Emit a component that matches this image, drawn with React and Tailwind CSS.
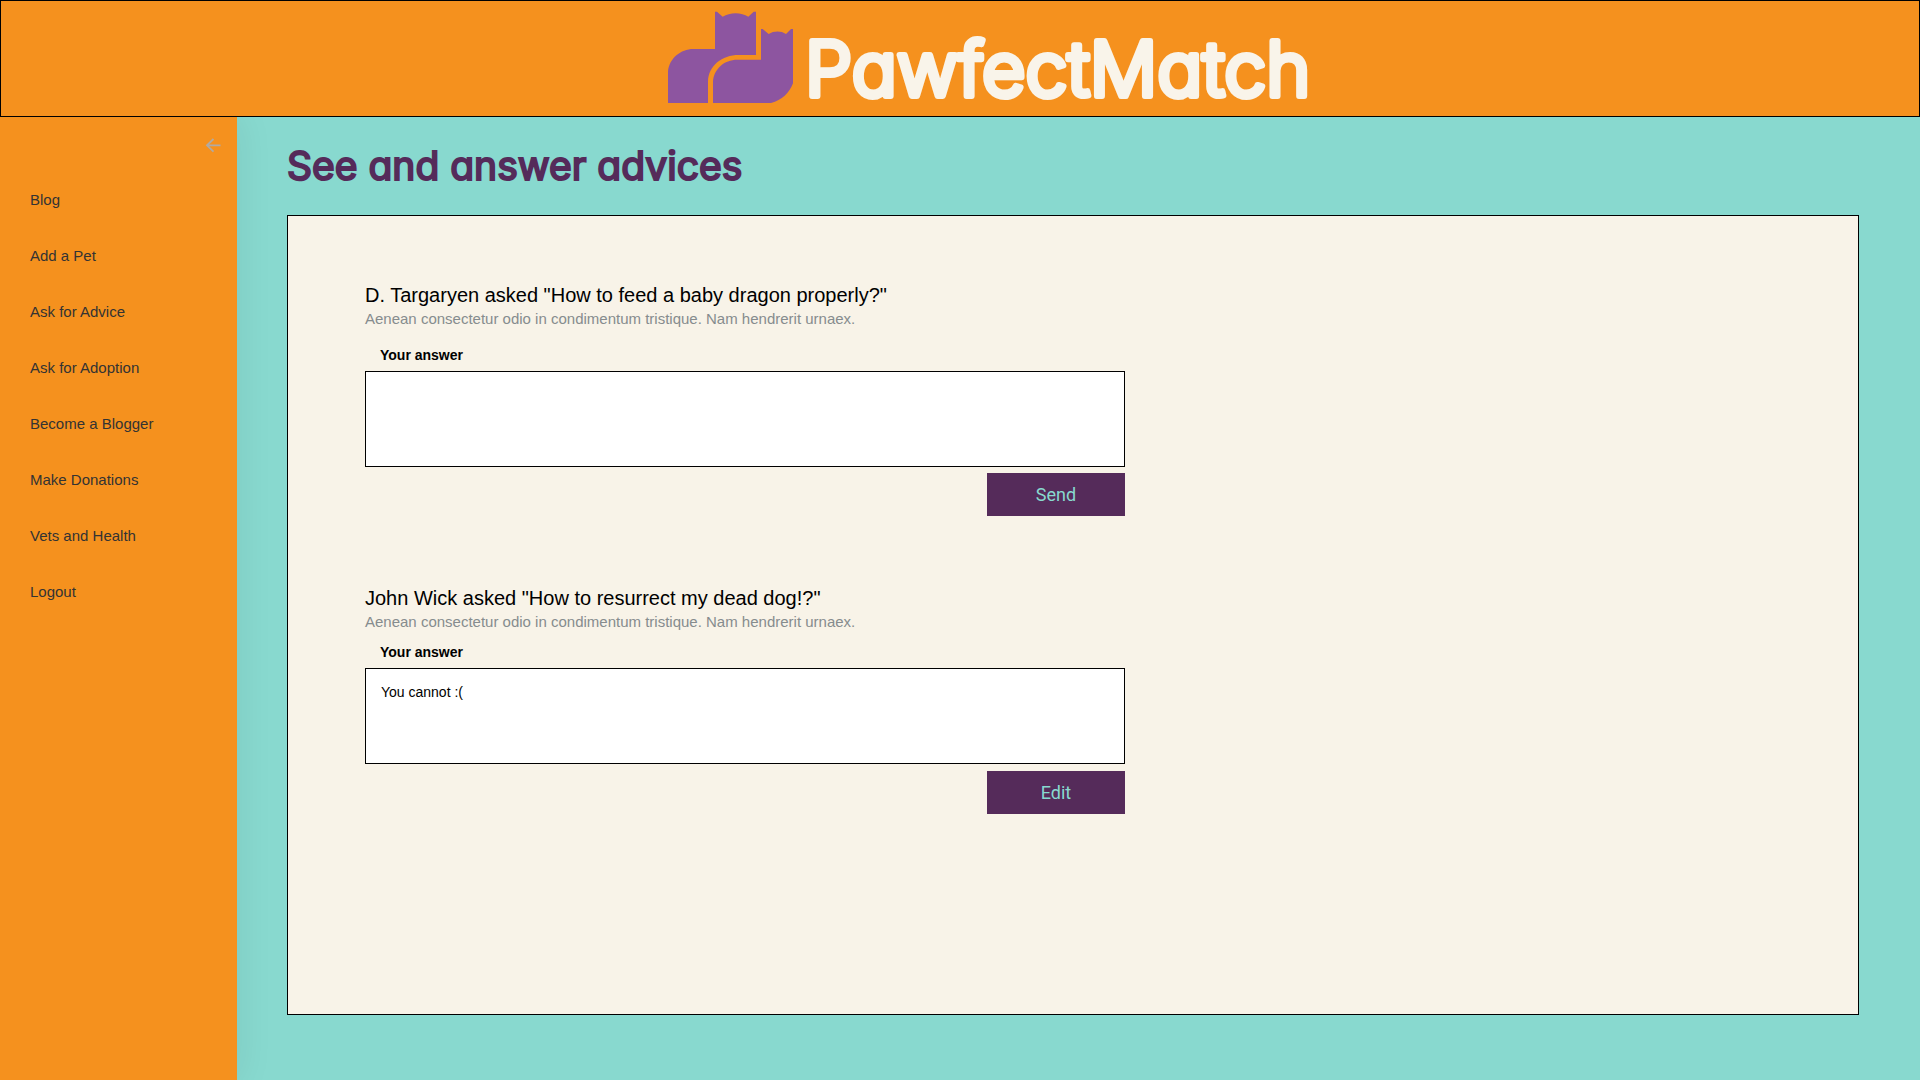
import { useId } from "react";

const links = [
  "Blog",
  "Add a Pet",
  "Ask for Advice",
  "Ask for Adoption",
  "Become a Blogger",
  "Make Donations",
  "Vets and Health",
  "Logout",
];

const display = "font-['Chalkboard','Chalkboard_SE',Inter,sans-serif] [font-feature-settings:'cv11']";

function CatsLogo() {
  return (
    <svg viewBox="0 0 375 276" className="mt-2.5 h-[92px] w-[125px] shrink-0" fill="#8d55a0" aria-hidden="true">
      <path d="M0 276V181C4 142 38 114 76 114H141V2H147L164 17C186 3 220 3 241 17L257 2H264V132H212C162 132 121 164 120 212V276Z" />
      <path d="M135 276V211C138 174 168 146 208 146H279V54H284L302 69C318 59 339 59 354 69L369 54H375V217C364 246 342 268 309 276Z" />
    </svg>
  );
}

function Wordmark() {
  return (
    <svg viewBox="0 0 510 115" className={`${display} h-[115px] w-[510px] shrink-0 text-[75px] font-light`}>
      <text
        x="0"
        y="95"
        fill="#f9f4ea"
        stroke="#f9f4ea"
        strokeWidth="6"
        strokeLinejoin="round"
        strokeLinecap="round"
      >
        PawfectMatch
      </text>
    </svg>
  );
}

function Header() {
  return (
    <header className="relative z-10 flex h-[117px] justify-center border border-black bg-[#f5911e] pl-[62px]">
      <a href="#home" className="flex items-start gap-3">
        <CatsLogo />
        <Wordmark />
      </a>
    </header>
  );
}

function Sidebar() {
  return (
    <aside className="w-[237px] shrink-0 bg-[#f5911e] shadow-[0_0_36px_rgba(0,0,0,0.08)]">
      <div className="flex justify-end pt-5 pr-4">
        <button type="button" aria-label="Collapse menu" className="flex h-4 w-4 items-center justify-center text-[#b0aaa5]">
          <svg viewBox="0 0 16 16" className="h-4 w-4" fill="none" stroke="currentColor" strokeWidth="1.8" aria-hidden="true">
            <path d="M8.5 2L2 8.3L8.5 14.6M2.4 8.3H15.5" />
          </svg>
        </button>
      </div>
      <nav className="mt-[19px]">
        <ul>
          {links.map((label) => (
            <li key={label}>
              <a href="#menu" className="block h-14 pl-[30px] text-[15px] leading-[56px] text-[#333]">
                {label}
              </a>
            </li>
          ))}
        </ul>
      </nav>
    </aside>
  );
}

function Question({ title, answer, action, className, labelClass, buttonClass }) {
  const id = useId();
  return (
    <section className={`w-[760px] max-w-full ${className}`}>
      <h2 className="text-xl leading-6 text-black">{title}</h2>
      <p className="text-[15px] leading-6 text-[#868c8e]">
        Aenean consectetur odio in condimentum tristique. Nam hendrerit urnaex.
      </p>
      <label htmlFor={id} className={`block pl-[15px] text-sm leading-5 font-bold text-black ${labelClass}`}>
        Your answer
      </label>
      <textarea
        id={id}
        defaultValue={answer}
        className="mt-1.5 block h-24 w-full resize-none border border-black bg-white px-[15px] py-[13px] text-sm leading-5 text-black"
      />
      <div className="flex justify-end">
        <button
          type="button"
          className={`h-[43px] w-[138px] bg-[#552b5a] font-[Roboto,sans-serif] text-lg text-[#88d9cf] ${buttonClass}`}
        >
          {action}
        </button>
      </div>
    </section>
  );
}

export default function App() {
  return (
    <div className="flex min-h-[calc(100vh-1px)] flex-col bg-[#88d9cf] font-['Liberation_Sans',Arial,sans-serif]">
      <Header />
      <div className="flex flex-1">
        <Sidebar />
        <main className="flex min-w-0 flex-1 flex-col pt-6 pr-[61px] pb-[65px] pl-[50px]">
          <h1 className={`${display} text-[39px] leading-[50px] font-normal text-[#552b5a] [-webkit-text-stroke:2px_#552b5a]`}>
            See and answer advices
          </h1>
          <div className="mt-6 flex-1 border border-black bg-[#f8f3e8] px-[77px] pt-[67px]">
            <Question
              title={'D. Targaryen asked "How to feed a baby dragon properly?"'}
              answer=""
              action="Send"
              className=""
              labelClass="mt-[14px]"
              buttonClass="mt-1.5"
            />
            <Question
              title={'John Wick asked "How to resurrect my dead dog!?"'}
              answer="You cannot :("
              action="Edit"
              className="mt-[70px]"
              labelClass="mt-2"
              buttonClass="mt-[7px]"
            />
          </div>
        </main>
      </div>
    </div>
  );
}
